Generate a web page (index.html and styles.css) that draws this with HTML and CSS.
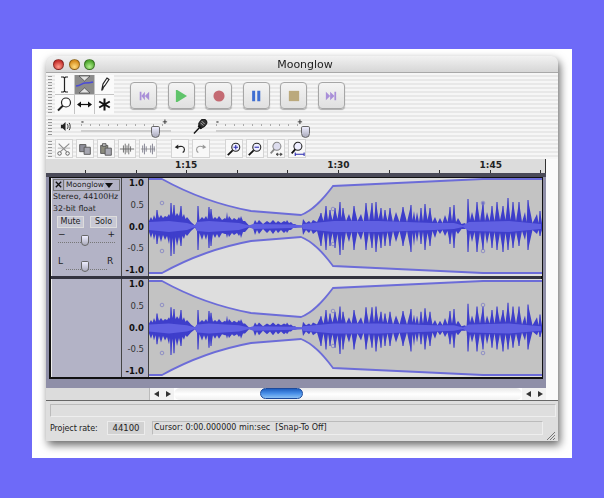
FILE: index.html
```html
<!DOCTYPE html>
<html lang="en">
<head>
<meta charset="utf-8">
<title>Moonglow</title>
<link rel="stylesheet" href="styles.css">
</head>
<body>
<main class="sheet">
<div class="window">
  <header class="titlebar">
    <div class="lights"><span class="light red"></span><span class="light amber"></span><span class="light green"></span></div>
    <h1 class="title">Moonglow</h1>
  </header>

  <section class="toolbars">
    <div class="row row-main">
      <span class="grip grip-tall"></span>
      <div class="tools">
        <span class="tool"><svg viewBox="0 0 19 19"><path d="M6 2h2.500l1 1 1-1H13M9.500 3v13M6 17h2.500l1-1 1 1H13" fill="none" stroke="#222" stroke-width="1.200"/></svg></span>
        <span class="tool tool-on"><svg viewBox="0 0 19 19"><path d="M4 1h11L9.500 6zM4 18h11l-5.500-5z" fill="#e4e4e4" stroke="#333" stroke-width=".6"/><path d="M1 11c5 0 6-3 9-3s5 0 8-1" fill="none" stroke="#4a4ad8" stroke-width="1.400"/></svg></span>
        <span class="tool"><svg viewBox="0 0 19 19"><path d="M7 14l1-5 4-6 2 1.500-4 6z" fill="#fff" stroke="#222" stroke-width="1.200"/><path d="M7 14l.5 2 1.500-3z" fill="#222"/></svg></span>
        <span class="tool"><svg viewBox="0 0 19 19"><circle cx="11" cy="7.500" r="4.500" fill="#fff" stroke="#222" stroke-width="1.200"/><path d="M8 10.500l-5 5" stroke="#222" stroke-width="2"/></svg></span>
        <span class="tool"><svg viewBox="0 0 19 19"><path d="M5 9.500h9" stroke="#111" stroke-width="1.200"/><path d="M2 9.500l4-3v6zM17 9.500l-4-3v6z" fill="#111"/></svg></span>
        <span class="tool"><svg viewBox="0 0 19 19"><path d="M9.500 3.500v12M4.200 6.500l10.600 6M14.800 6.500l-10.600 6" stroke="#111" stroke-width="2"/></svg></span>
      </div>
      <div class="transport">
        <button class="tbtn"><svg viewBox="0 0 14 14"><path d="M2 2h2v10H2zM8 2v10L4 7zM13 2v10L8 7z" fill="#a98fd8"/></svg></button>
        <button class="tbtn"><svg viewBox="0 0 14 14"><path d="M1 0l13 7-13 7z" fill="#5fc46a" transform="translate(0 -1) scale(1 1.150)"/></svg></button>
        <button class="tbtn"><svg viewBox="0 0 14 14"><circle cx="7" cy="7" r="6.500" fill="#c46a72"/></svg></button>
        <button class="tbtn"><svg viewBox="0 0 14 14"><path d="M2.500 1h3.500v12H2.500zM8.500 1H12v12H8.500z" fill="#3f6fd2"/></svg></button>
        <button class="tbtn"><svg viewBox="0 0 14 14"><path d="M1 1h12v12H1z" fill="#bba97c"/></svg></button>
        <button class="tbtn"><svg viewBox="0 0 14 14"><path d="M1 2v10l5-5zM6 2v10l5-5zM11 2h2v10h-2z" fill="#a98fd8"/></svg></button>
      </div>
    </div>

    <div class="row row-mixer">
      <span class="grip grip-mid"></span>
      <svg class="ico-speaker" viewBox="0 0 12 12"><path d="M1 4h2l3-3v10L3 8H1z" fill="#222"/><path d="M8 3.500c1 1.500 1 3.500 0 5M10 2c1.500 2.500 1.500 5.500 0 8" fill="none" stroke="#222"/></svg>
      <div class="hslider hslider-out"><span class="thumb thumb-out"></span></div>
      <svg class="ico-mic" viewBox="0 0 16 16"><path d="M1 15.500l7-7.500" stroke="#111" stroke-width="1.500"/><path d="M6 6l4 4-2 1-3-3z" fill="#111"/><rect x="7" y="0" width="7" height="9" rx="3.500" transform="rotate(42 10.500 4.500)" fill="#333" stroke="#111"/><path d="M9 2l3.500 3.500M8 4l3 3" stroke="#ddd" stroke-width=".8"/></svg>
      <div class="hslider hslider-in"><span class="thumb thumb-in"></span></div>
    </div>

    <div class="row row-edit">
      <span class="grip grip-small"></span>
      <span class="ebtn"><svg viewBox="0 0 18 18"><path d="M3 3l9 9M15 3L5 12" stroke="#8a8a8a" stroke-width="1.200"/><circle cx="4" cy="14" r="2" fill="none" stroke="#555"/><circle cx="13" cy="14" r="2" fill="none" stroke="#555"/><path d="M2 8h14" stroke="#999" stroke-width=".8"/></svg></span>
      <span class="ebtn"><svg viewBox="0 0 18 18"><path d="M3 4h7v8H3z" fill="#8f8f9a" stroke="#555"/><path d="M8 7h7v8H8z" fill="#a6a6b0" stroke="#555"/></svg></span>
      <span class="ebtn"><svg viewBox="0 0 18 18"><path d="M3 5h8v9H3z" fill="#8a8a7c" stroke="#555"/><path d="M5 3h4v3H5z" fill="#bbb" stroke="#555"/><path d="M8 8h7v8H8z" fill="#a8a8b2" stroke="#555"/></svg></span>
      <span class="ebtn"><svg viewBox="0 0 18 18"><path d="M1 9h16M5 5v8M7 3v12M9 5v8M11 3v12M13 6v6" stroke="#666" stroke-width="1"/></svg></span>
      <span class="ebtn"><svg viewBox="0 0 18 18"><path d="M1 9h16" stroke="#999"/><path d="M3 5v8M5 3v12M7 6v6M12 5v8M14 3v12M16 6v6" stroke="#7a7a8a"/></svg></span>
      <span class="ebtn ebtn-undo"><svg viewBox="0 0 18 18"><path d="M6 7c4-2 8-1 8 2.500 0 2-1 3-2 3.500" fill="none" stroke="#222" stroke-width="1.300"/><path d="M3 7l4-3v5z" fill="#222"/></svg></span>
      <span class="ebtn"><svg viewBox="0 0 18 18"><path d="M12 7c-4-2-8-1-8 2.500 0 2 1 3 2 3.500" fill="none" stroke="#999" stroke-width="1.200"/><path d="M15 7l-4-3v5z" fill="#999"/></svg></span>
      <span class="ebtn ebtn-zoom"><svg viewBox="0 0 18 18"><circle cx="11" cy="7" r="4.500" fill="#eef" stroke="#222" stroke-width="1.200"/><path d="M7.500 10.500L2 16" stroke="#111" stroke-width="2"/><path d="M8.500 7h5M11 4.500v5" stroke="#2a2ab0" stroke-width="1.200"/></svg></span>
      <span class="ebtn"><svg viewBox="0 0 18 18"><circle cx="11" cy="7" r="4.500" fill="#eef" stroke="#222" stroke-width="1.200"/><path d="M7.500 10.500L2 16" stroke="#111" stroke-width="2"/><path d="M8.500 7h5" stroke="#2a2ab0" stroke-width="1.200"/></svg></span>
      <span class="ebtn"><svg viewBox="0 0 18 18"><circle cx="10" cy="6" r="4.500" fill="#dde" stroke="#888" stroke-width="1.200"/><path d="M7 9.500L3 14" stroke="#888" stroke-width="2"/><path d="M9 15h7M9 15l2-1.500v3zM16 15l-2-1.500v3z" stroke="#444" stroke-width=".7" fill="#444"/></svg></span>
      <span class="ebtn"><svg viewBox="0 0 18 18"><circle cx="10" cy="6" r="4.500" fill="#eef" stroke="#222" stroke-width="1.200"/><path d="M7 9.500L3 14" stroke="#111" stroke-width="2"/><path d="M7 15h10M7 13v4M17 13v4" stroke="#2a2ab0" stroke-width="1.200"/></svg></span>
    </div>
  </section>

  <div class="workspace">
    <div class="main">
      <div class="ruler"><span class="mark">1:15</span><span class="mark">1:30</span><span class="mark">1:45</span></div>
      <div class="rulerbar"></div>
      <div class="tracks">
        <div class="track">
          <div class="label">
            <div class="namebar"><span class="closebox"><svg viewBox="0 0 10 10"><path d="M2 2l6 6M8 2l-6 6" stroke="#111" stroke-width="1.500"/></svg></span><span class="trackname">Moonglow</span><span class="menu-tri"></span></div>
            <p class="info">Stereo, 44100Hz</p>
            <p class="info">32-bit float</p>
            <div class="mutes"><span class="minibtn">Mute</span><span class="minibtn">Solo</span></div>
            <div class="gain"><div class="gain-ends"><span>−</span><span>+</span></div><div class="mini-slider"><span class="thumb thumb-mini"></span></div></div>
            <div class="pan"><span class="pan-end">L</span><div class="mini-slider pan-slider"><span class="thumb thumb-mini"></span></div><span class="pan-end">R</span></div>
          </div>
          <div class="vruler"><span class="strong">1.0</span><span>0.5</span><span class="strong">0.0</span><span>-0.5</span><span class="strong">-1.0</span></div>
          <svg class="wave" viewBox="0 0 393 98" preserveAspectRatio="none">
            <path id="env-back" class="env-fill" d="M0 1H13C40 16 70 27 102 33L152 37C165 32 175 20 184 8L334 1H393V95H334L184 88C175 76 165 64 152 59L102 63C70 69 40 80 13 95H0z"/>
            <g id="wave-shape">
              <path class="peak-fill" d="M0 43L2 39L3.500 42L5 37L6.500 41L8 32L10 40L12 37L14 40L16 38L18 39L20 36L21 38L22 25L23.500 37L25 27L26.500 38L28 35L30 38L32 28L33.500 39L35 36L36.500 41L38 39L42 44L46 47.500L48 44L49 28L50.500 42L53 39L55 41L57 38L58.500 41L60 29L61 37L62 31L64 41L66 39L68 41L70 38L73 42L76 40L77 41L78 34L79 41L80 38L83 42L85 40L88 42L90 39L91 41L92 38L94 43L96 43L100 47.500L104 47L106 42L108 45L110 42L114 46L118 43L121 45L124 42L127 45L129 43L132 45L135 43L137 44L138 42L140 45L142 44L144 46L146 46L148 47.500L153 47.500L154 41L157 45L160 43L162 45L164 42L168 44L172 35L174.500 43L177 28L179 42L181 32L183.500 42L186 30L188.500 41L191 24L192.500 40L194 30L197 43L200 36L202.500 43L205 28L208.500 43L212 36L214.500 44L217 25L220 43L223 25L225 42L227 24L229.500 41L232 30L234 42L236 32L238.500 43L241 30L244 44L247 34L250.500 44L254 29L258 44L262 27L263.500 42L265 33L266.500 43L268 34L270 44L272 30L274 43L276 26L278.500 42L281 30L283.500 44L286 39L288.500 45L291 40L293.500 45L296 37L298.500 44L301 29L303 43L305 27L307 44L309 40L312.500 46L316 45L317.500 47L319 21L321 42L323 34L325.500 43L328 24L331 43L334 24L336 43L338 34L340.500 43L343 28L345.500 43L348 24L351 42L354 28L356.500 42L359 20L361.500 42L364 24L367 43L370 24L373 44L376 34L377.500 44L379 22L383.500 45L388 36L389.500 45L391 33L393 45V52L391 58L389.500 52L388 56L383.500 52L379 72L377.500 53L376 62L373 53L370 68L367 54L364 70L361.500 55L359 72L356.500 55L354 74L351 55L348 72L345.500 54L343 70L340.500 54L338 66L336 54L334 72L331 54L328 74L325.500 54L323 64L321 55L319 74L317.500 50L316 51L312.500 51L309 56L307 53L305 70L303 54L301 66L298.500 53L296 58L293.500 52L291 56L288.500 52L286 60L283.500 53L281 68L278.500 55L276 72L274 54L272 66L270 53L268 64L266.500 54L265 68L263.500 55L262 74L258 53L254 68L250.500 53L247 64L244 53L241 68L238.500 54L236 68L234 55L232 70L229.500 56L227 74L225 55L223 70L220 54L217 72L214.500 53L212 62L208.500 54L205 72L202.500 54L200 64L197 54L194 72L192.500 57L191 77L188.500 56L186 70L183.500 55L181 68L179 55L177 72L174.500 54L172 68L168 53L164 56L162 52L160 55L157 52L154 57L153 49.500L148 49.500L146 50L144 50L142 52L140 52L138 55L137 53L135 55L132 52L129 55L127 52L124 56L121 52L118 55L114 51L110 56L108 52L106 57L104 50L100 49.500L96 54L94 54L92 60L91 56L90 58L88 55L85 57L83 55L80 59L79 56L78 60L77 56L76 56L73 55L70 60L68 56L66 60L64 56L62 68L61 60L60 70L58.500 56L57 62L55 56L53 62L50.500 55L49 72L48 53L46 49.500L42 53L38 58L36.500 56L35 61L33.500 58L32 68L30 59L28 68L26.500 59L25 76L23.500 60L22 78L21 59L20 66L18 58L16 62L14 57L12 64L10 57L8 66L6.500 56L5 62L3.500 55L2 60L0 54z"/>
              <path class="peak-line" d="M8 32V66M22 25V78M25 27V76M32 28V68M49 28V72M60 29V70M62 31V68M172 35V68M177 28V72M181 32V68M186 30V70M191 24V77M194 30V72M205 28V72M217 25V72M223 25V70M227 24V74M232 30V70M236 32V68M241 30V68M254 29V68M262 27V74M272 30V66M276 26V72M281 30V68M301 29V66M305 27V70M319 21V74M328 24V74M334 24V72M343 28V70M348 24V72M354 28V74M359 20V72M364 24V70M370 24V68M379 22V72M391 33V58"/>
              <path class="rms-fill" d="M0 44L20 43L38 45L46 47.500L48 44L60 43L90 45L100 47.500L104 46L145 46.500L153 47.500L154 46L185 43L230 43L285 45L305 45L314 47.500L320 44L360 43L392 46V51L360 54L320 53L314 49L305 51L285 52L230 54L185 54L154 51L153 49L145 50L104 51L100 49L90 52L60 54L48 53L46 49L38 52L20 54L0 52z"/>
            </g>
            <g id="env-front">
              <path class="env-line" d="M0 1H13C40 16 70 27 102 33L152 37C165 32 175 20 184 8L334 1H393M0 95H13C40 80 70 69 102 63L152 59C165 64 175 76 184 88L334 95H393"/>
              <g class="env-dots"><circle cx="13" cy="25" r="1.800"/><circle cx="13" cy="73" r="1.800"/><circle cx="184" cy="31" r="1.800"/><circle cx="184" cy="66" r="1.800"/><circle cx="334" cy="25" r="1.800"/><circle cx="334" cy="73" r="1.800"/></g>
            </g>
          </svg>
        </div>
        <div class="track">
          <div class="label label-empty"></div>
          <div class="vruler"><span class="strong">1.0</span><span>0.5</span><span class="strong">0.0</span><span>-0.5</span><span class="strong">-1.0</span></div>
          <svg class="wave" viewBox="0 -1 393 98" preserveAspectRatio="none">
            <use href="#env-back"/>
            <use href="#wave-shape" transform="translate(0 4.800) scale(1 .9)"/>
            <use href="#env-front"/>
          </svg>
        </div>
      </div>
      <div class="band"></div>
      <div class="scrollbar">
        <div class="scroll-blank"></div>
        <div class="arrows"><span class="arrow-l"></span><span class="arrow-r"></span></div>
        <div class="scroll-track"><span class="scroll-thumb"></span></div>
        <div class="arrows"><span class="arrow-l"></span><span class="arrow-r"></span></div>
      </div>
    </div>
    <div class="margin-strip"></div>
  </div>

  <footer class="status">
    <div class="status-empty"></div>
    <div class="status-row">
      <span class="rate-label">Project rate:</span>
      <span class="rate-box">44100</span>
      <span class="cursor-box">Cursor: 0:00.000000 min:sec&nbsp;&nbsp;[Snap-To Off]</span>
      <span class="resize"><svg viewBox="0 0 10 10"><path d="M9 1L1 9M9 4L4 9M9 7L7 9" stroke="#777"/></svg></span>
    </div>
  </footer>
</div>
</main>
</body>
</html>
```
FILE: styles.css
```css
* { box-sizing: border-box; }
html, body { margin: 0; padding: 0; }
body { background: #6e6af8; width: 604px; height: 498px; overflow: hidden; font-family: "Liberation Sans", Arial, sans-serif; }
svg { display: block; }
p, h1 { margin: 0; }

.sheet { margin: 49px 32px 0; height: 409px; background: #fff; padding: 7px 14px 0; }
.window { width: 512px; height: 385px; border-radius: 7px 7px 0 0; box-shadow: 2px 4px 8px rgba(0,0,0,.6); background: #e2e2e2; display: flex; flex-direction: column; filter: blur(.35px); }

.titlebar { height: 17px; flex: none; display: flex; align-items: center; border-radius: 7px 7px 0 0; background: linear-gradient(#f2f2f2, #d6d6d6); border-bottom: 1px solid #a8a8a8; padding-left: 7px; }
.lights { display: flex; gap: 4.500px; }
.light { width: 11px; height: 11px; border-radius: 50%; border: 1px solid rgba(0,0,0,.35); }
.red { background: radial-gradient(circle at 50% 75%, #ff9d8e, #c8322e 70%); }
.amber { background: radial-gradient(circle at 50% 75%, #ffdc80, #d89020 70%); }
.green { background: radial-gradient(circle at 50% 75%, #b4f090, #50a830 70%); }
.title { flex: 1; margin-right: 43px; text-align: center; font: 400 11px "DejaVu Sans", sans-serif; color: #222; }

.toolbars { height: 86px; flex: none; background: repeating-linear-gradient(#f6f6f6 0 2px, #e8e8e8 2px 4px); display: flex; flex-direction: column; padding: 2px 0 0 2px; }
.row { display: flex; align-items: flex-start; }
.row-main { height: 40px; }
.row-mixer { height: 23px; align-items: center; }
.row-edit { height: 21px; gap: 3px; align-items: center; }

.grip { width: 4px; flex: none; background: radial-gradient(circle, #999 .7px, transparent 1px) 0 0 / 2px 3px; }
.grip-tall { height: 38px; margin-right: 3px; }
.grip-mid { height: 18px; margin-right: 8px; }
.grip-small { height: 18px; }

.tools { display: grid; grid-template-columns: repeat(3, 19px); grid-auto-rows: 19px; background: #c4c4c4; gap: 1px; width: 59px; }
.tool { background: #fafafa; display: flex; }
.tool-on { background: #8b8b8b; }
.tool svg { width: 19px; height: 19px; }

.transport { display: flex; gap: 10.600px; margin: 7px 0 0 16px; }
.tbtn { width: 27px; height: 27px; padding: 0; display: flex; align-items: center; justify-content: center; border: 1px solid #a6a6a6; border-radius: 4px; background: linear-gradient(#f4f4f4, #e0e0e0); box-shadow: 0 1px 1px rgba(0,0,0,.3); }
.tbtn svg { width: 12px; height: 12px; }

.ico-speaker { width: 11px; height: 11px; margin-right: 10px; }
.hslider { width: 90px; height: 8px; margin-top: 2px; flex: none; position: relative; border-bottom: 2px solid #cfcfcf; background: repeating-linear-gradient(90deg, #aaa 0 1px, transparent 1px 9px) 0 0 / 100% 2px no-repeat; }
.hslider::before, .hslider::after { position: absolute; top: -3px; width: 3px; height: 3px; font: 700 7px/3px "DejaVu Sans", sans-serif; color: #111; }
.hslider::before { content: "-"; left: 0; }
.hslider::after { content: "+"; right: 6px; }
.thumb { position: absolute; width: 9px; height: 12px; background: linear-gradient(#eef, #aab); border: 1px solid #666; border-radius: 2px 2px 5px 5px; }
.thumb-out { left: 70px; top: 2px; }
.thumb-in { right: -4px; top: 2px; }
.ico-mic { width: 15px; height: 15px; margin: 0 8px 0 22px; }

.ebtn { width: 18px; height: 19px; background: #f8f8f8; border: 1px solid #d4d4d4; flex: none; display: flex; align-items: center; justify-content: center; }
.ebtn svg { width: 16px; height: 16px; }
.ebtn-undo { margin-left: 11px; }
.ebtn-zoom { margin-left: 12px; }

.workspace { display: flex; flex: none; height: 241px; background: #fff; }
.main { width: 500px; flex: none; display: flex; flex-direction: column; background: #8f8fa8; }
.margin-strip { flex: 1; background: #fafafa; }

.ruler { height: 14px; flex: none; display: flex; padding-left: 64px; font: 700 9px "DejaVu Sans", sans-serif; color: #222; background: repeating-linear-gradient(90deg, #333 0 1px, transparent 1px 50.600px) 39px 100% / 100% 3px no-repeat, #dcdcdc; border-right: 1px solid #333; }
.mark { width: 152.300px; flex: none; text-align: center; line-height: 13px; }
.rulerbar { height: 4px; flex: none; background: #4a4a58; }

.tracks { margin-left: 3px; width: 494px; border: 2px solid #111; border-top-width: 1px; display: flex; flex-direction: column; gap: 3px; background: #33333f; height: 202px; flex: none; }
.track { display: flex; height: 98px; flex: none; }
.label { width: 71px; flex: none; background: #b3b3c6; padding: 1px 1px 0; font: 8.500px "DejaVu Sans", sans-serif; color: #222; border-right: 1px solid #444; border-left: 1px solid #eee; }
.label-empty { padding: 0; }
.namebar { display: flex; height: 12px; align-items: center; gap: 1px; border: 1px solid #777; }
.closebox { width: 10px; height: 10px; flex: none; border-right: 1px solid #777; }
.trackname { flex: 1; background: #c0c0d0; line-height: 10px; padding-left: 1px; font-size: 7.500px; }
.menu-tri { width: 0; height: 0; border-left: 4px solid transparent; border-right: 4px solid transparent; border-top: 5px solid #111; margin-right: 7px; }
.info { line-height: 12px; white-space: nowrap; font-size: 7.800px; }
.mutes { display: flex; gap: 6px; margin: 1px 0 0 4px; }
.minibtn { width: 27px; height: 12px; background: #c8c8d4; border: 1px solid #ddd; text-align: center; line-height: 10px; font-size: 8px; }
.gain { margin: 3px 5px 0; height: 18px; }
.gain-ends { display: flex; justify-content: space-between; line-height: 7px; font-size: 9px; }
.mini-slider { height: 5px; border-bottom: 1px dotted #777; position: relative; }
.thumb-mini { width: 8px; height: 11px; left: 23px; top: -3px; }
.pan { display: flex; align-items: center; margin: 3px 5px 0; font-size: 9px; }
.pan-end { width: 8px; flex: none; }
.pan-slider { flex: 1; height: 8px; margin-top: 10px; }
.pan-slider .thumb-mini { left: 15px; top: -1px; }

.vruler { width: 27px; flex: none; background: #b3b3c6; border-right: 1px solid #444; padding: 0 4px 0 0; display: flex; flex-direction: column; justify-content: space-between; align-items: flex-end; font: 8.500px/11px "DejaVu Sans", sans-serif; color: #333; }
.strong { font-weight: 700; color: #111; }

.wave { width: 393px; height: 98px; flex: none; background: #dedede; }
.env-fill { fill: #c3c3c3; }
.peak-fill { fill: #3e3ecb; }
.peak-line { fill: none; stroke: #3e3ecb; stroke-width: 1.100; }
.rms-fill { fill: #6060e2; }
.env-line { fill: none; stroke: #6c6cd8; stroke-width: 1.800; }
.env-dots circle { fill: none; stroke: #7a7ac4; stroke-width: .7; }

.band { height: 9px; flex: none; background: #8f8fa8; }
.scrollbar { height: 12px; flex: none; display: flex; align-items: stretch; background: #fff; }
.scroll-blank { width: 104px; flex: none; background: #dcdcdc; border-right: 1px solid #bbb; }
.arrows { width: 24px; flex: none; background: #f2f2f2; display: flex; align-items: center; justify-content: space-around; }
.arrow-l { width: 0; height: 0; border: 3px solid transparent; border-left-width: 0; border-right: 5px solid #333; }
.arrow-r { width: 0; height: 0; border: 3px solid transparent; border-right-width: 0; border-left: 5px solid #333; }
.scroll-track { flex: 1; background: linear-gradient(#e8e8e8, #fff 50%, #f0f0f0); padding-left: 86px; border-radius: 6px; }
.scroll-thumb { display: block; width: 43px; height: 11px; border-radius: 6px; background: linear-gradient(#1f5fc0, #4a90e8 50%, #8ac0f4); border: 1px solid #1c4a9c; }

.status { flex: 1; border-top: 1px solid #666; background: #dedede; padding: 3px 2px 0 4px; position: relative; }
.status-empty { height: 13px; border: 1px solid #bbb; border-right-color: #eee; border-bottom-color: #eee; }
.status-row { display: flex; align-items: center; margin-top: 4px; font: 8.500px "DejaVu Sans", sans-serif; color: #222; }
.rate-label { width: 57px; flex: none; font-size: 8px; letter-spacing: -.1px; }
.rate-box { width: 38px; height: 14px; flex: none; background: #d2d2d2; border: 1px solid #ececec; text-align: center; line-height: 12px; }
.cursor-box { width: 391px; height: 14px; flex: none; margin-left: 7px; padding-left: 1px; border: 1px solid #bbb; border-right-color: #eee; border-bottom-color: #eee; line-height: 12px; font-size: 8px; white-space: nowrap; }
.resize { position: absolute; right: 2px; bottom: 0; width: 10px; height: 10px; }
```
